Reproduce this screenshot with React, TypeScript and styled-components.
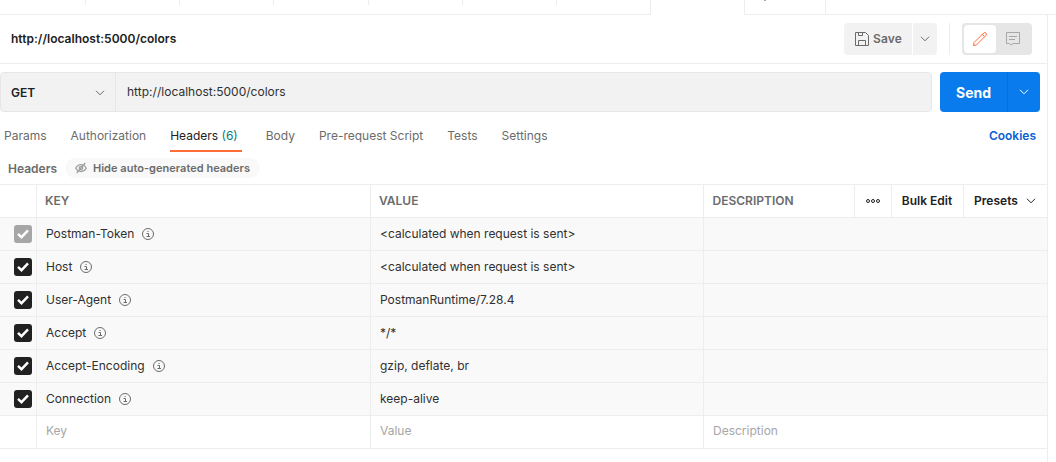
import React from "react";
import styled, { createGlobalStyle } from "styled-components";

const line = "#ededed";

const Global = createGlobalStyle`
  *, *::before, *::after { box-sizing: border-box; }
  html, body { margin: 0; background: #fff; overflow: hidden; }
  body {
    font-family: Inter, "Liberation Sans", sans-serif;
    font-size: 12px;
    color: #212121;
  }
  button { font: inherit; color: inherit; border: 0; background: none; padding: 0; margin: 0; }
  svg { display: block; flex: none; }
`;

const Page = styled.div`
  width: 1056px;
  height: 462px;
  display: flex;
  flex-direction: column;
`;

const TabStrip = styled.div`
  display: flex;
  height: 15px;
  flex: none;
`;

const StripTab = styled.div<{ $w: number; $active?: boolean; $tall?: boolean }>`
  width: ${(p) => p.$w}px;
  height: 15px;
  display: flex;
  justify-content: flex-end;
  border-bottom: 1px solid ${(p) => (p.$active ? "transparent" : line)};
  &::after {
    content: "";
    width: 1px;
    height: ${(p) => (p.$tall ? 15 : 5)}px;
    background: ${line};
  }
`;

const StripGlyph = styled.div`
  width: 2px;
  height: 1px;
  margin: 0 auto 0 19px;
  background: #a6a6a6;
`;

const StripRest = styled.div`
  flex: 1;
  border-bottom: 1px solid ${line};
`;

const Main = styled.main`
  width: 1048px;
  flex: 1;
  border-right: 1px solid ${line};
`;

const TitleBar = styled.header`
  height: 49px;
  display: flex;
  align-items: center;
  padding: 0 15px 0 11px;
  border-bottom: 1px solid ${line};
`;

const Title = styled.h1`
  flex: 1;
  margin: 0;
  padding-bottom: 2px;
  font-size: 12px;
  font-weight: 600;
  letter-spacing: 0.02px;
`;

const SaveButton = styled.button`
  width: 68px;
  height: 32px;
  display: flex;
  align-items: center;
  gap: 4px;
  padding: 0 0 1px 11px;
  border-radius: 4px 0 0 4px;
  background: #f2f2f2;
  color: #6b6b6b;
  font-weight: 600;
  letter-spacing: 0.15px;
`;

const SaveMenu = styled.button`
  width: 24px;
  height: 32px;
  margin-left: 1px;
  display: flex;
  align-items: center;
  justify-content: center;
  border-radius: 0 4px 4px 0;
  background: #f2f2f2;
  color: #6b6b6b;
`;

const Separator = styled.div`
  width: 1px;
  height: 32px;
  margin: 0 12px;
  background: ${line};
`;

const ModeSwitch = styled.div`
  width: 70px;
  height: 32px;
  padding: 2px;
  display: flex;
  border-radius: 4px;
  background: #e6e6e6;
`;

const Mode = styled.button<{ $on?: boolean }>`
  width: ${(p) => (p.$on ? 32 : 34)}px;
  height: 28px;
  display: flex;
  align-items: center;
  justify-content: center;
  border-radius: 4px;
  background: ${(p) => (p.$on ? "#fff" : "transparent")};
  color: ${(p) => (p.$on ? "#ff6c37" : "#a6a6a6")};
`;

const RequestBar = styled.div`
  display: flex;
  gap: 8px;
  padding: 8px 7px 0 0;
`;

const UrlBox = styled.div`
  flex: 1;
  height: 40px;
  display: flex;
  border: 1px solid #e6e6e6;
  border-radius: 4px;
  background: #f2f2f2;
`;

const Method = styled.div`
  width: 115px;
  display: flex;
  align-items: center;
  justify-content: space-between;
  padding: 1px 10px 0 10px;
  border-right: 1px solid #e6e6e6;
  font-weight: 600;
  svg { color: #6b6b6b; }
`;

const Url = styled.div`
  display: flex;
  align-items: center;
  padding: 0 0 1px 11px;
  letter-spacing: 0.02px;
  color: #303030;
`;

const Send = styled.div`
  display: flex;
  width: 100px;
  height: 40px;
  border-radius: 4px;
  background: #097bed;
  color: #fff;
`;

const SendButton = styled.button`
  width: 67px;
  font-size: 14px;
  font-weight: 700;
`;

const SendMenu = styled.button`
  flex: 1;
  display: flex;
  align-items: center;
  justify-content: center;
  border-left: 1px solid #0570dc;
`;

const Tabs = styled.nav`
  height: 40px;
  display: flex;
  gap: 24px;
  padding: 8px 11px 0 4px;
`;

const Tab = styled.a<{ $active?: boolean }>`
  height: 32px;
  line-height: 31px;
  white-space: nowrap;
  color: ${(p) => (p.$active ? "#212121" : "#6b6b6b")};
  ${(p) => p.$active && "padding-right: 4px; box-shadow: inset 0 -2px #ff6c37;"}
  span { color: #007f77; }
`;

const Cookies = styled.a`
  margin-left: auto;
  line-height: 31px;
  font-weight: 600;
  color: #0a5fd0;
`;

const SubHeader = styled.div`
  height: 32px;
  display: flex;
  align-items: center;
  padding-left: 8px;
  color: #6b6b6b;
  font-weight: 600;
`;

const SubTitle = styled.span`
  width: 57px;
`;

const HidePill = styled.button`
  width: 195px;
  height: 20px;
  display: flex;
  align-items: center;
  gap: 6px;
  padding-left: 10px;
  border-radius: 10px;
  background: #f9f9f9;
  font-size: 11px;
  font-weight: 600;
  letter-spacing: 0.02px;
  white-space: nowrap;
`;

const Table = styled.div`
  border-top: 1px solid ${line};
`;

const Row = styled.div<{ $plain?: boolean }>`
  height: 33px;
  display: grid;
  grid-template-columns: 37px 334px 333px 1fr;
  border-bottom: 1px solid ${line};
  background: ${(p) => (p.$plain ? "#fff" : "#f9f9f9")};
`;

const Cell = styled.div<{ $muted?: boolean }>`
  display: flex;
  align-items: center;
  gap: 8px;
  padding: 0 0 ${(p) => (p.$muted ? 4 : 1)}px 9px;
  border-right: 1px solid ${line};
  color: ${(p) => (p.$muted ? "#a6a6a6" : "#303030")};
  &:last-child { border-right: 0; }
`;

const KeyName = styled.span`
  padding-bottom: 1px;
`;

const CheckCell = styled(Cell)`
  padding: 0 0 0 14px;
`;

const HeadCell = styled(Cell)`
  padding: 0 0 1px 8px;
  color: #6b6b6b;
  font-weight: 600;
`;

const DescriptionHead = styled(HeadCell)`
  padding: 0;
  gap: 0;
`;

const DescriptionLabel = styled.span`
  flex: 1;
  padding: 0 0 1px 8.5px;
`;

const HeadAction = styled.button<{ $w: number }>`
  width: ${(p) => p.$w}px;
  height: 32px;
  display: flex;
  align-items: center;
  justify-content: center;
  gap: 8px;
  padding: 0 1px 1px 0;
  border-left: 1px solid ${line};
  color: #212121;
  svg { margin-top: 1px; }
`;

const Box = styled.span<{ $disabled?: boolean }>`
  width: 18px;
  height: 18px;
  display: flex;
  align-items: center;
  justify-content: center;
  border-radius: 3px;
  background: ${(p) => (p.$disabled ? "#a6a6a6" : "#212121")};
`;

const Chevron = () => (
  <svg width="10" height="6" viewBox="0 0 10 6" fill="none" stroke="currentColor">
    <path d="M1 0.8 5 4.8 9 0.8" />
  </svg>
);

const SaveIcon = () => (
  <svg width="14" height="14" viewBox="0 0 14 14" fill="none" stroke="currentColor">
    <path d="M.5.5h10l3 3v10H.5zM3.5 13.5v-5h7v5M3.5.5v3h4v-3" />
  </svg>
);

const PencilIcon = () => (
  <svg width="16" height="16" viewBox="0 0 16 16" fill="none" stroke="currentColor" strokeLinejoin="round">
    <path d="M1.5 14.5 2 11.6 11.6 2a1.7 1.7 0 0 1 2.4 2.4L4.4 14zM10.2 3.4l2.4 2.4" />
  </svg>
);

const CommentIcon = () => (
  <svg width="14" height="14" viewBox="0 0 14 14" fill="none" stroke="currentColor">
    <path d="M.5.5h13v11H7L5 13.2 3.4 11.5H.5zM3 4.5h8M3 7.5h6" />
  </svg>
);

const HiddenEyeIcon = () => (
  <svg width="12" height="12" viewBox="0 0 12 12" fill="none" stroke="#a0a0a0" strokeWidth="1.3">
    <path d="M.7 6.3C2 3.8 4 2.7 6 2.7s4 1.1 5.3 3.6C10 8.6 8 9.5 6 9.5S2 8.6.7 6.3zM10.3 1 1.7 11" />
    <circle cx="6" cy="6" r="1.7" />
  </svg>
);

const InfoIcon = () => (
  <svg width="12" height="12" viewBox="0 0 12 12" fill="none" stroke="#6b6b6b">
    <circle cx="6" cy="6" r="5.5" />
    <path d="M4.5 5.5H6.5V8.5M4.5 8.5H8M5.5 3.5H6.6" />
  </svg>
);

const DotsIcon = () => (
  <svg width="14" height="4" viewBox="0 0 14 4" fill="none" stroke="currentColor">
    <circle cx="2" cy="2" r="1.5" />
    <circle cx="7" cy="2" r="1.5" />
    <circle cx="12" cy="2" r="1.5" />
  </svg>
);

const Check = () => (
  <svg width="12" height="10" viewBox="0 0 12 10" fill="none" stroke="#fff" strokeWidth="2.4">
    <path d="M1 4.8 4.5 8.2 11 1.4" />
  </svg>
);

const headers = [
  { key: "Postman-Token", value: "<calculated when request is sent>", disabled: true },
  { key: "Host", value: "<calculated when request is sent>" },
  { key: "User-Agent", value: "PostmanRuntime/7.28.4" },
  { key: "Accept", value: "*/*" },
  { key: "Accept-Encoding", value: "gzip, deflate, br" },
  { key: "Connection", value: "keep-alive" },
];

const stripWidths = [86, 94, 94, 95, 94, 94];

export default function App() {
  return (
    <Page>
      <Global />
      <TabStrip>
        {stripWidths.map((w, i) => (
          <StripTab key={i} $w={w} />
        ))}
        <StripTab $w={94} $tall />
        <StripTab $w={94} $active $tall />
        <StripTab $w={81} $tall>
          <StripGlyph />
        </StripTab>
        <StripRest />
      </TabStrip>
      <Main>
        <TitleBar>
          <Title>http://localhost:5000/colors</Title>
          <SaveButton>
            <SaveIcon />
            Save
          </SaveButton>
          <SaveMenu>
            <Chevron />
          </SaveMenu>
          <Separator />
          <ModeSwitch>
            <Mode $on>
              <PencilIcon />
            </Mode>
            <Mode>
              <CommentIcon />
            </Mode>
          </ModeSwitch>
        </TitleBar>
        <RequestBar>
          <UrlBox>
            <Method>
              GET
              <Chevron />
            </Method>
            <Url>http://localhost:5000/colors</Url>
          </UrlBox>
          <Send>
            <SendButton>Send</SendButton>
            <SendMenu>
              <Chevron />
            </SendMenu>
          </Send>
        </RequestBar>
        <Tabs>
          <Tab>Params</Tab>
          <Tab>Authorization</Tab>
          <Tab $active>
            Headers <span>(6)</span>
          </Tab>
          <Tab>Body</Tab>
          <Tab>Pre-request Script</Tab>
          <Tab>Tests</Tab>
          <Tab>Settings</Tab>
          <Cookies>Cookies</Cookies>
        </Tabs>
        <SubHeader>
          <SubTitle>Headers</SubTitle>
          <HidePill>
            <HiddenEyeIcon />
            Hide auto-generated headers
          </HidePill>
        </SubHeader>
        <Table>
          <Row $plain>
            <HeadCell />
            <HeadCell>KEY</HeadCell>
            <HeadCell>VALUE</HeadCell>
            <DescriptionHead>
              <DescriptionLabel>DESCRIPTION</DescriptionLabel>
              <HeadAction $w={37}>
                <DotsIcon />
              </HeadAction>
              <HeadAction $w={72}>Bulk Edit</HeadAction>
              <HeadAction $w={84}>
                Presets
                <Chevron />
              </HeadAction>
            </DescriptionHead>
          </Row>
          {headers.map((h) => (
            <Row key={h.key}>
              <CheckCell>
                <Box $disabled={h.disabled}>
                  <Check />
                </Box>
              </CheckCell>
              <Cell>
                <KeyName>{h.key}</KeyName>
                <InfoIcon />
              </Cell>
              <Cell>{h.value}</Cell>
              <Cell />
            </Row>
          ))}
          <Row $plain>
            <Cell />
            <Cell $muted>Key</Cell>
            <Cell $muted>Value</Cell>
            <Cell $muted>Description</Cell>
          </Row>
        </Table>
      </Main>
    </Page>
  );
}
